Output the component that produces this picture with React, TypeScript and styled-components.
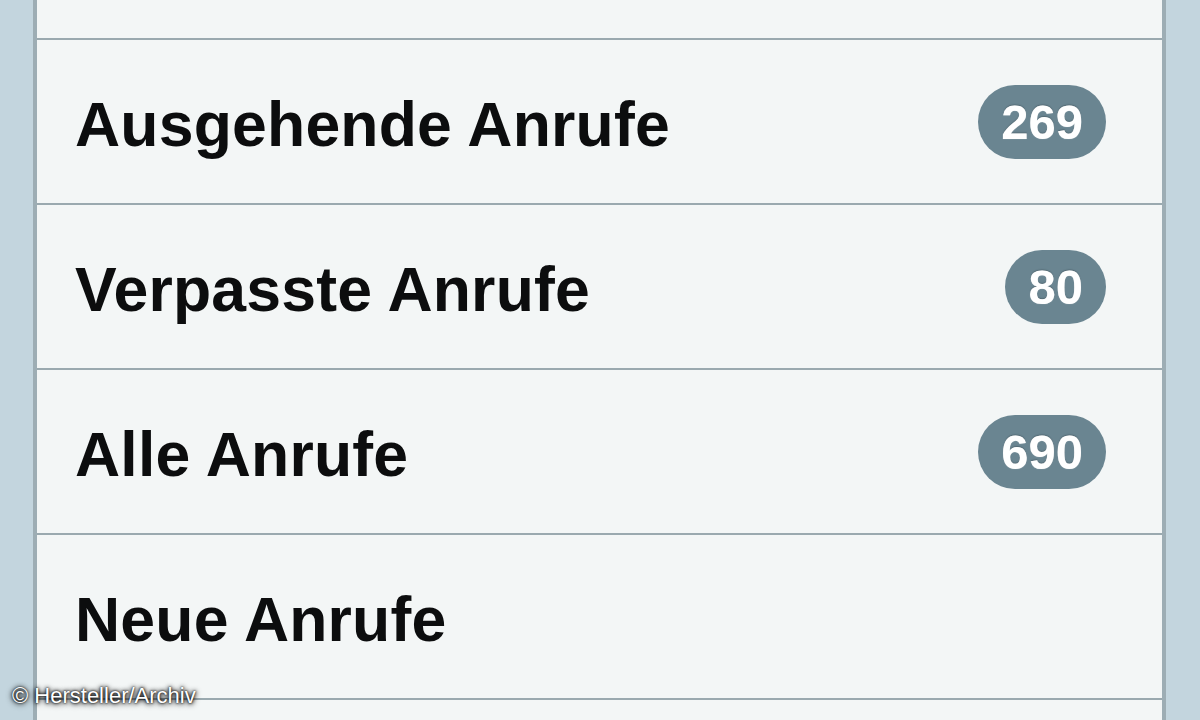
import React from "react";
import styled, { createGlobalStyle } from "styled-components";

const Global = createGlobalStyle`
  html, body { margin: 0; padding: 0; }
  body {
    width: 1200px;
    height: 720px;
    overflow: hidden;
    background: #c3d5de;
    font-family: "Liberation Sans", Arial, Helvetica, sans-serif;
  }
`;

const Page = styled.div`
  position: relative;
  width: 1200px;
  height: 720px;
  display: flex;
  justify-content: flex-start;
  padding-left: 33px;
  box-sizing: border-box;
  overflow: hidden;
`;

const Card = styled.div`
  width: 1133px;
  height: 760px;
  box-sizing: border-box;
  background: #f3f6f6;
  border-left: 4px solid #9dadb4;
  border-right: 4px solid #9dadb4;
  display: flex;
  flex-direction: column;
`;

const Row = styled.div<{ $h: number }>`
  flex: 0 0 auto;
  height: ${(p) => p.$h}px;
  border-bottom: 2px solid #9aa9af;
  display: flex;
  align-items: center;
  justify-content: space-between;
  padding: 0 56px 0 38px;
`;

const Label = styled.span`
  font-size: 62.5px;
  font-weight: 700;
  color: #0c0d0e;
  letter-spacing: 0.2px;
  padding-top: 4px;
`;

const Badge = styled.span`
  display: inline-flex;
  align-items: center;
  justify-content: center;
  height: 74px;
  padding: 0 23px;
  min-width: 97px;
  box-sizing: border-box;
  border-radius: 37px;
  background: #6a8591;
  color: #ffffff;
  font-size: 49px;
  font-weight: 700;
  letter-spacing: 0px;
  text-shadow: 0 0 1px rgba(255, 255, 255, 0.6), 0 -1px 1px rgba(40, 60, 70, 0.5);
`;

const Credit = styled.div`
  position: absolute;
  left: 12px;
  bottom: 11px;
  font-size: 22px;
  color: #ffffff;
  text-shadow: 0 0 2px #000, 0 0 4px #000, 0 1px 6px rgba(0, 0, 0, 0.9);
  white-space: nowrap;
`;

const rows: { label: string; count?: number }[] = [
  { label: "Ausgehende Anrufe", count: 269 },
  { label: "Verpasste Anrufe", count: 80 },
  { label: "Alle Anrufe", count: 690 },
  { label: "Neue Anrufe" },
];

export default function App() {
  return (
    <>
      <Global />
      <Page>
        <Card>
          <Row $h={38} />
          {rows.map((r) => (
            <Row key={r.label} $h={163}>
              <Label>{r.label}</Label>
              {r.count !== undefined && <Badge>{r.count}</Badge>}
            </Row>
          ))}
          <Row $h={60} />
        </Card>
        <Credit>© Hersteller/Archiv</Credit>
      </Page>
    </>
  );
}
